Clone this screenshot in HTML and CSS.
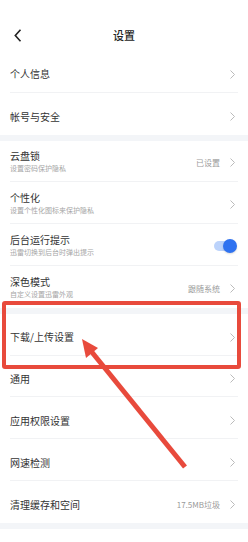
FILE: index.html
```html
<!DOCTYPE html>
<html lang="zh-CN">
<head>
<meta charset="utf-8">
<link rel="stylesheet" href="styles.css">
</head>
<body>
<div class="page">
  <header class="header">
    <svg class="back" width="8" height="13" viewBox="0 0 8 13"><path d="M6.5 0.8 L1.3 6.5 L6.5 12.2" fill="none" stroke="#222" stroke-width="1.6" stroke-linejoin="miter"/></svg>
    <div class="title">设置</div>
  </header>

  <section class="group">
    <div class="row"><span class="label">个人信息</span><span class="right"><svg class="chev" width="5" height="9" viewBox="0 0 5 9"><path d="M0.5 0.5 L4.5 4.5 L0.5 8.5" fill="none" stroke="#bbb" stroke-width="1"/></svg></span></div>
    <div class="row"><span class="label">帐号与安全</span><span class="right"><svg class="chev" width="5" height="9" viewBox="0 0 5 9"><path d="M0.5 0.5 L4.5 4.5 L0.5 8.5" fill="none" stroke="#bbb" stroke-width="1"/></svg></span></div>
  </section>
  <div class="band"></div>

  <section class="group">
    <div class="row two"><div class="texts"><span class="label">云盘锁</span><span class="sub">设置密码保护隐私</span></div><span class="right"><span class="value">已设置</span><svg class="chev" width="5" height="9" viewBox="0 0 5 9"><path d="M0.5 0.5 L4.5 4.5 L0.5 8.5" fill="none" stroke="#bbb" stroke-width="1"/></svg></span></div>
    <div class="row two"><div class="texts"><span class="label">个性化</span><span class="sub">设置个性化图标来保护隐私</span></div><span class="right"><svg class="chev" width="5" height="9" viewBox="0 0 5 9"><path d="M0.5 0.5 L4.5 4.5 L0.5 8.5" fill="none" stroke="#bbb" stroke-width="1"/></svg></span></div>
    <div class="row two"><div class="texts"><span class="label">后台运行提示</span><span class="sub">迅雷切换到后台时弹出提示</span></div><span class="right"><span class="toggle"><span class="knob"></span></span></span></div>
    <div class="row two"><div class="texts"><span class="label">深色模式</span><span class="sub">自定义设置迅雷外观</span></div><span class="right"><span class="value">跟随系统</span><svg class="chev" width="5" height="9" viewBox="0 0 5 9"><path d="M0.5 0.5 L4.5 4.5 L0.5 8.5" fill="none" stroke="#bbb" stroke-width="1"/></svg></span></div>
  </section>
  <div class="band"></div>

  <section class="group">
    <div class="row"><span class="label">下载/上传设置</span><span class="right"><svg class="chev" width="5" height="9" viewBox="0 0 5 9"><path d="M0.5 0.5 L4.5 4.5 L0.5 8.5" fill="none" stroke="#bbb" stroke-width="1"/></svg></span></div>
    <div class="row"><span class="label">通用</span><span class="right"><svg class="chev" width="5" height="9" viewBox="0 0 5 9"><path d="M0.5 0.5 L4.5 4.5 L0.5 8.5" fill="none" stroke="#bbb" stroke-width="1"/></svg></span></div>
    <div class="row"><span class="label">应用权限设置</span><span class="right"><svg class="chev" width="5" height="9" viewBox="0 0 5 9"><path d="M0.5 0.5 L4.5 4.5 L0.5 8.5" fill="none" stroke="#bbb" stroke-width="1"/></svg></span></div>
    <div class="row"><span class="label">网速检测</span><span class="right"><svg class="chev" width="5" height="9" viewBox="0 0 5 9"><path d="M0.5 0.5 L4.5 4.5 L0.5 8.5" fill="none" stroke="#bbb" stroke-width="1"/></svg></span></div>
    <div class="row"><span class="label">清理缓存和空间</span><span class="right"><span class="value">17.5MB垃圾</span><svg class="chev" width="5" height="9" viewBox="0 0 5 9"><path d="M0.5 0.5 L4.5 4.5 L0.5 8.5" fill="none" stroke="#bbb" stroke-width="1"/></svg></span></div>
  </section>
  <div class="band"></div>

  <div class="highlight"></div>
  <svg class="arrow" width="248" height="542" viewBox="0 0 248 542">
    <line x1="185" y1="467" x2="91" y2="351" stroke="#e84a3c" stroke-width="5" stroke-linecap="butt"/>
    <polygon points="82,339 98,348 86,358" fill="#e84a3c"/>
  </svg>
</div>
</body>
</html>
```

FILE: styles.css
```css
html, body {
  margin: 0;
  padding: 0;
  background: #fff;
}
.page {
  position: relative;
  width: 248px;
  height: 542px;
  overflow: hidden;
  font-family: "Noto Sans CJK SC", "Noto Sans", sans-serif;
  color: #333;
}
.header {
  height: 51px;
  box-sizing: border-box;
  padding-top: 27px;
  display: flex;
  justify-content: center;
  align-items: flex-start;
  position: relative;
}
.back {
  position: absolute;
  left: 14px;
  top: 29px;
}
.title {
  font-size: 11px;
  font-weight: 500;
  line-height: 16px;
  color: #222;
}
.group {
  display: flex;
  flex-direction: column;
}
.row {
  height: 41.8px;
  box-sizing: border-box;
  margin: 0 10px;
  padding-top: 6px;
  padding-right: 3px;
  display: flex;
  align-items: center;
  justify-content: space-between;
  border-bottom: 1px solid #f1f2f4;
}
.row:last-child {
  border-bottom: none;
}
.row.two {
  padding-top: 2.5px;
}
.label {
  font-size: 10px;
  line-height: 12px;
  color: #333;
}
.texts {
  display: flex;
  flex-direction: column;
}
.sub {
  font-size: 7px;
  line-height: 12px;
  color: #a6a6a6;
}
.right {
  display: flex;
  align-items: center;
  gap: 10px;
}
.value {
  font-size: 8px;
  color: #9a9a9a;
}
.chev {
  display: block;
}
.toggle {
  position: relative;
  width: 20px;
  height: 10px;
  border-radius: 5px;
  background: #bcd3fb;
  margin-right: 1px;
}
.knob {
  position: absolute;
  right: -3px;
  top: -2px;
  width: 14px;
  height: 14px;
  border-radius: 50%;
  background: #2f72f0;
  box-shadow: 0 1px 2px rgba(0,0,0,0.15);
}
.band {
  height: 6px;
  background: #f3f5f8;
}
.highlight {
  position: absolute;
  left: 2px;
  top: 301px;
  width: 231px;
  height: 60px;
  border: 4px solid #e84a3c;
  border-radius: 3px;
}
.arrow {
  position: absolute;
  left: 0;
  top: 0;
}
```
